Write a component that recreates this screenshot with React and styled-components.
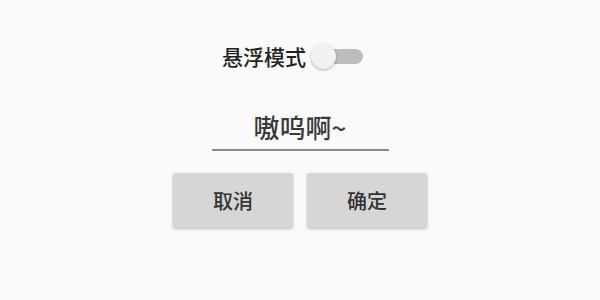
import React from "react";
import styled, { createGlobalStyle } from "styled-components";

const Global = createGlobalStyle`
  html, body { margin: 0; padding: 0; background: #fafafa; }
  body { font-family: "Noto Sans CJK SC", "Noto Sans", sans-serif; }
`;

const Page = styled.div`
  width: 600px;
  height: 300px;
  background: #fafafa;
  display: flex;
  flex-direction: column;
  align-items: center;
  box-sizing: border-box;
  padding-top: 37px;
`;

const SwitchRow = styled.div`
  display: flex;
  align-items: center;
  gap: 5px;
  margin-left: -15px;
  height: 38px;
`;

const Label = styled.span`
  font-size: 21px;
  font-weight: 500;
  color: #222;
  line-height: 1;
`;

const Switch = styled.div`
  position: relative;
  width: 52px;
  height: 25px;
  display: flex;
  align-items: center;
`;

const Track = styled.div`
  margin-left: 10px;
  width: 42px;
  height: 15px;
  border-radius: 8px;
  background: #bcbcbc;
`;

const Thumb = styled.div`
  position: absolute;
  left: 0;
  top: 0;
  width: 25px;
  height: 25px;
  border-radius: 50%;
  background: #f1f1f1;
  box-shadow: 0 1px 3px rgba(0, 0, 0, 0.3);
`;

const Field = styled.div`
  margin-top: 30px;
  width: 177px;
  height: 46px;
  border-bottom: 2px solid #8a8a8a;
  display: flex;
  align-items: center;
  justify-content: center;
  box-sizing: border-box;
  padding-bottom: 1px;
`;

const FieldText = styled.span`
  font-size: 26px;
  font-weight: 500;
  color: #3a3a3a;
  line-height: 1;
`;

const Buttons = styled.div`
  display: flex;
  gap: 14px;
  margin-top: 22px;
`;

const Button = styled.button`
  width: 120px;
  height: 55px;
  border: none;
  border-radius: 3px;
  background: #d6d6d6;
  box-shadow: 0 1px 3px rgba(0, 0, 0, 0.25);
  font-family: "Noto Sans CJK SC", "Noto Sans", sans-serif;
  font-size: 20px;
  font-weight: 500;
  color: #333;
  padding: 0;
`;

export default function App() {
  return (
    <>
      <Global />
      <Page>
        <SwitchRow>
          <Label>悬浮模式</Label>
          <Switch>
            <Track />
            <Thumb />
          </Switch>
        </SwitchRow>
        <Field>
          <FieldText>嗷呜啊~</FieldText>
        </Field>
        <Buttons>
          <Button>取消</Button>
          <Button>确定</Button>
        </Buttons>
      </Page>
    </>
  );
}
